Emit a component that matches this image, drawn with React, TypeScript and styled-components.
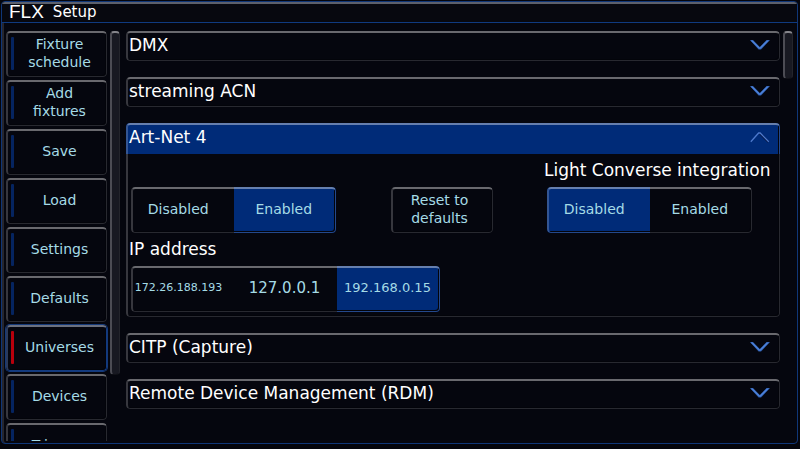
import React, { useState } from 'react';
import styled, { createGlobalStyle, css } from 'styled-components';

const GlobalStyle = createGlobalStyle`
  * { box-sizing: border-box; }
  body {
    margin: 0;
    background: #04050c;
    color: #fff;
    font-family: "DejaVu Sans", sans-serif;
    overflow: hidden;
  }
  button { font-family: inherit; padding: 0; border: 0; background: none; cursor: pointer; }
`;

const bevel = css`
  position: relative;
  border-radius: 4px;
  overflow: hidden;
  &::after {
    content: '';
    position: absolute;
    inset: 0;
    pointer-events: none;
    border-radius: 4px;
    border-style: solid;
    border-width: 2px 1px 1px 2px;
    border-color: rgba(255, 255, 255, 0.4) rgba(255, 255, 255, 0.14)
      rgba(255, 255, 255, 0.14) rgba(255, 255, 255, 0.2);
    box-shadow: inset -1px -1px 0 #03040a;
  }
`;

const Window = styled.div`
  height: calc(100vh - 6px);
  margin: 1px 2px 5px 1px;
  border: 1px solid #0f3678;
  border-radius: 4px;
  background: #05060e;
  display: flex;
  flex-direction: column;
  overflow: hidden;
  box-shadow: inset 2px 0 0 #26262e;
`;

const TitleBar = styled.header`
  height: 21px;
  flex: none;
  border-top: 2px solid #5c606c;
  border-bottom: 1px solid #0f3a80;
  display: flex;
  align-items: center;
  gap: 9px;
  padding-left: 7px;
  background: #07080f;
`;

const Logo = styled.span`
  font-family: "Liberation Sans", sans-serif;
  font-size: 19px;
  line-height: 16px;
  padding-bottom: 2px;
`;

const Title = styled.h1`
  margin: 0;
  padding-bottom: 3px;
  font-size: 15px;
  line-height: 18px;
  font-weight: 400;
`;

const Content = styled.div`
  flex: 1;
  min-height: 0;
  margin-bottom: 2px;
  padding: 8px 4px 0 4px;
  display: flex;
  align-items: flex-start;
  overflow: hidden;
`;

const Sidebar = styled.nav`
  width: 101px;
  flex: none;
  display: flex;
  flex-direction: column;
  gap: 3px;
`;

const MenuButton = styled.button<{ $active: boolean }>`
  ${bevel}
  height: 46px;
  flex: none;
  padding: 0 18px 2px 24px;
  display: flex;
  align-items: center;
  justify-content: center;
  color: #a5dbe6;
  font-size: 14px;
  line-height: 18px;
  white-space: nowrap;
  &::before {
    content: '';
    position: absolute;
    left: 5px;
    top: 6px;
    bottom: 7px;
    width: 3px;
    border-radius: 1px;
    background: ${p => (p.$active ? '#b8000c' : '#052460')};
  }
  ${p => p.$active && css`
    box-shadow: 0 0 0 1px #14397a;
    &::after { border-color: #6c7180 #123a80 #123a80 #2c3a5a; }
  `}
`;

const ButtonText = styled.span`
  display: block;
  white-space: pre-line;
  text-align: center;
`;

const SideGap = styled.div`
  width: 3px;
  flex: none;
`;

const ScrollThumb = styled.div<{ $size: string }>`
  width: 10px;
  height: ${p => p.$size};
  flex: none;
  border-radius: 4px;
  border-style: solid;
  border-width: 2px 1px 1px 2px;
  border-color: #85858b #24252c #101117 #4c4c54;
  background: #181922;
`;

const Main = styled.main`
  flex: 1;
  min-width: 0;
  margin: 0 3px 0 6px;
  display: flex;
  flex-direction: column;
  gap: 16px;
`;

const Panel = styled.section`
  ${bevel}
`;

const PanelHeader = styled.button<{ $open: boolean }>`
  width: 100%;
  height: ${p => (p.$open ? '31px' : '30px')};
  padding: 0 10px ${p => (p.$open ? '3px' : '1px')} 3px;
  display: flex;
  align-items: center;
  justify-content: space-between;
  background: ${p => (p.$open ? '#002b78' : 'transparent')};
  color: #fff;
  font-size: 17px;
  line-height: 21px;
`;

const PanelBody = styled.div`
  padding: 6px 28px 5px 5px;
`;

const Row = styled.div`
  display: flex;
  align-items: flex-end;
  justify-content: space-between;
`;

const Group = styled.div`
  display: flex;
  flex-direction: column;
  width: 205px;
`;

const Label = styled.span`
  display: block;
  height: 27px;
  margin-left: -3px;
  font-size: 17px;
  line-height: 21px;
  white-space: nowrap;
`;

const FieldLabel = styled.div`
  padding: 6px 0;
  margin-left: -2px;
  font-size: 17px;
  line-height: 21px;
`;

const Segments = styled.div<{ $wide?: boolean }>`
  ${bevel}
  height: 46px;
  width: ${p => (p.$wide ? '309px' : '205px')};
  display: grid;
  grid-auto-flow: column;
  grid-auto-columns: minmax(0, 1fr);
`;

const Segment = styled.button<{ $on: boolean; $size?: number }>`
  padding: 0 4px 2px 2px;
  color: #a5dbe6;
  background: ${p => (p.$on ? '#002b78' : 'transparent')};
  font-size: ${p => p.$size ?? 14}px;
  line-height: 18px;
  &:first-child { padding: 0 8px 2px 0; }
`;

const PlainButton = styled.button`
  ${bevel}
  width: 102px;
  height: 46px;
  padding: 0 4px 3px 0;
  color: #a5dbe6;
  font-size: 14px;
  line-height: 18px;
`;

function Chevron({ up }: { up?: boolean }) {
  return (
    <svg width="20" height="20" viewBox="0 0 20 20" aria-hidden="true">
      {up ? (
        <>
          <path d="M9.6 6 L18.5 15" stroke="#071b4c" strokeWidth="2.4" fill="none" />
          <path d="M0.8 14.7 L8.6 6 H10.2 L18.8 14.7" stroke="#4c79cd" strokeWidth="1.3" fill="none" />
        </>
      ) : (
        <>
          <path d="M0 4 H3 L9.8 11 L16.6 4 H20 L11 13.6 H8.6 Z" fill="#2c5aa8" />
          <path d="M0.5 4.4 H2.8 L9.8 11.6 L16.8 4.4 H19 L10.6 12.8 H9 Z" fill="#4c80d8" />
        </>
      )}
    </svg>
  );
}

function Accordion({ title, children }: { title: string; children?: React.ReactNode }) {
  const [open, setOpen] = useState(Boolean(children));
  return (
    <Panel>
      <PanelHeader type="button" $open={open} aria-expanded={open} onClick={() => setOpen(!open)}>
        {title}
        <Chevron up={open} />
      </PanelHeader>
      {open && children}
    </Panel>
  );
}

type Option = { text: string; size?: number };

function Choice({ label, options, initial, wide }: {
  label: string; options: Option[]; initial: number; wide?: boolean;
}) {
  const [value, setValue] = useState(initial);
  return (
    <Segments role="group" aria-label={label} $wide={wide}>
      {options.map((o, i) => (
        <Segment key={o.text} type="button" $on={i === value} $size={o.size}
          aria-pressed={i === value} onClick={() => setValue(i)}>
          {o.text}
        </Segment>
      ))}
    </Segments>
  );
}

const menu = ['Fixture\nschedule', 'Add\nfixtures', 'Save', 'Load', 'Settings',
  'Defaults', 'Universes', 'Devices', 'Triggers'];
const onOff: Option[] = [{ text: 'Disabled' }, { text: 'Enabled' }];
const addresses: Option[] = [
  { text: '172.26.188.193', size: 11 },
  { text: '127.0.0.1', size: 15 },
  { text: '192.168.0.15', size: 13 },
];

export default function App() {
  const [page, setPage] = useState('Universes');
  return (
    <>
      <GlobalStyle />
      <Window>
        <TitleBar>
          <Logo>FLX</Logo>
          <Title>Setup</Title>
        </TitleBar>
        <Content>
          <Sidebar>
            {menu.map(name => (
              <MenuButton key={name} type="button" $active={name === page} onClick={() => setPage(name)}>
                <ButtonText>{name}</ButtonText>
              </MenuButton>
            ))}
          </Sidebar>
          <SideGap />
          <ScrollThumb $size="344px" />
          <Main>
            <Accordion title="DMX" />
            <Accordion title="streaming ACN" />
            <Accordion title="Art-Net 4">
              <PanelBody>
                <Row>
                  <Choice label="Art-Net 4" options={onOff} initial={1} />
                  <PlainButton type="button"><ButtonText>{'Reset to\ndefaults'}</ButtonText></PlainButton>
                  <Group>
                    <Label>Light Converse integration</Label>
                    <Choice label="Light Converse integration" options={onOff} initial={0} />
                  </Group>
                </Row>
                <FieldLabel>IP address</FieldLabel>
                <Choice label="IP address" options={addresses} initial={2} wide />
              </PanelBody>
            </Accordion>
            <Accordion title="CITP (Capture)" />
            <Accordion title="Remote Device Management (RDM)" />
          </Main>
          <ScrollThumb $size="48px" />
        </Content>
      </Window>
    </>
  );
}
